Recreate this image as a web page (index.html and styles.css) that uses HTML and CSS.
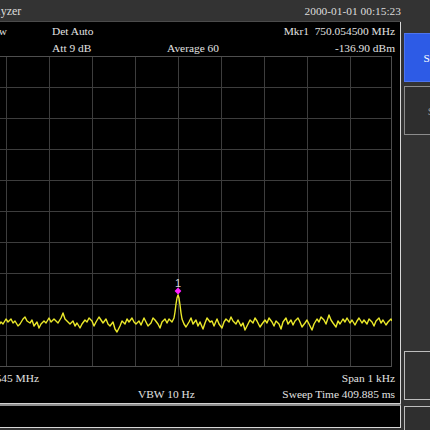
FILE: index.html
```html
<!DOCTYPE html>
<html>
<head>
<meta charset="utf-8">
<link rel="stylesheet" href="styles.css">
</head>
<body>
<div class="app">
  <div class="main">
    <div class="titlebar"><span class="title">Spectrum Analyzer</span><span class="clock">2000-01-01 00:15:23</span></div>
    <div class="panel">
      <div class="info info-top">
        <div class="ca"><span>IFGain:Low</span></div><span>Det Auto</span><span></span><span class="cd">Mkr1&nbsp;&nbsp;750.054500 MHz</span>
        <div class="ca"></div><span>Att 9 dB</span><span>Average 60</span><span class="cd">-136.90 dBm</span>
      </div>
      <svg class="plot" width="429" height="311" viewBox="0 0 429 311">
        <g class="grid">
          <line x1="43.5" y1="0" x2="43.5" y2="311"/>
          <line x1="86.5" y1="0" x2="86.5" y2="311"/>
          <line x1="129.5" y1="0" x2="129.5" y2="311"/>
          <line x1="172.5" y1="0" x2="172.5" y2="311"/>
          <line x1="215.5" y1="0" x2="215.5" y2="311"/>
          <line x1="258.5" y1="0" x2="258.5" y2="311"/>
          <line x1="301.5" y1="0" x2="301.5" y2="311"/>
          <line x1="344.5" y1="0" x2="344.5" y2="311"/>
          <line x1="387.5" y1="0" x2="387.5" y2="311"/>
          <line x1="0" y1="31.5" x2="429" y2="31.5"/>
          <line x1="0" y1="62.5" x2="429" y2="62.5"/>
          <line x1="0" y1="93.5" x2="429" y2="93.5"/>
          <line x1="0" y1="124.5" x2="429" y2="124.5"/>
          <line x1="0" y1="155.5" x2="429" y2="155.5"/>
          <line x1="0" y1="186.5" x2="429" y2="186.5"/>
          <line x1="0" y1="217.5" x2="429" y2="217.5"/>
          <line x1="0" y1="248.5" x2="429" y2="248.5"/>
          <line x1="0" y1="279.5" x2="429" y2="279.5"/>
        </g>
        <rect class="frame" x="0.5" y="0.5" width="428" height="310"/>
        <polyline class="trace" points="0,262 2,265 4,263 7,267 9,264 11,266 14,262 16,266 19,264 21,268 24,263 26,265 28,262 31,266 33,264 36,269 38,266 40,268 43,263 45,266 48,263 50,267 52,265 55,270 57,268 60,263 62,261 64,265 67,267 69,264 71,270 74,266 76,272 78,268 81,265 83,267 86,262 88,266 91,263 93,265 95,267 98,262 100,257 102,263 105,266 107,268 110,265 112,270 114,267 117,272 119,268 122,264 124,266 126,262 129,265 131,270 133,266 136,261 138,264 140,267 143,263 145,268 147,270 150,266 152,273 154,276 157,270 159,265 162,268 164,263 166,266 169,262 171,266 173,268 176,265 178,269 181,262 183,266 185,270 188,267 190,262 192,264 195,268 197,272 199,266 202,263 204,267 206,263 209,266 211,262 212,256 213,248 214,242 215,239 216,242 217,249 218,257 219,263 221,268 223,271 226,266 228,262 230,268 233,264 235,270 237,266 240,273 242,267 244,262 247,266 249,265 251,270 254,263 256,268 259,272 261,266 263,263 266,266 268,261 270,265 273,268 275,264 278,270 280,267 282,274 285,268 287,264 290,267 292,262 294,265 297,271 299,268 302,264 304,267 306,262 309,266 311,270 313,265 316,268 318,273 320,266 323,262 325,268 328,264 330,269 332,265 335,262 337,266 339,271 342,267 344,264 347,270 349,274 351,268 354,263 356,266 358,261 361,264 363,268 366,259 368,264 370,267 373,271 375,265 377,268 380,263 382,266 384,262 387,267 389,264 392,269 394,265 396,262 399,267 401,264 404,268 406,263 409,266 411,270 413,265 416,262 418,267 420,264 423,269 425,266 428,263 429,265"/>
        <text class="mkr-label" x="215" y="230.5">1</text>
        <polygon class="mkr" points="215,231.6 218.4,235 215,238.4 211.6,235"/>
      </svg>
      <div class="info info-bottom">
        <div class="ca"><span>Center 750.0545 MHz</span></div><span></span><span></span><span class="cd">Span 1 kHz</span>
        <div class="ca"></div><span></span><span>VBW 10 Hz</span><span class="cd">Sweep Time 409.885 ms</span>
      </div>
    </div>
    <div class="status"></div>
  </div>
  <div class="side">
    <div class="key key-active">Span</div>
    <div class="key key-dim">Set</div>
    <div class="key key-empty"></div>
    <div class="key key-empty"></div>
    <div class="key key-empty"></div>
    <div class="key key-empty"></div>
    <div class="key key-last"></div>
    <div class="key key-back"></div>
  </div>
</div>
</body>
</html>
```

FILE: styles.css
```css
html, body {
  margin: 0;
  padding: 0;
  background: #333333;
  overflow: hidden;
}

.app {
  display: flex;
  width: 430px;
  height: 430px;
  overflow: hidden;
  font-family: "Liberation Serif", "Times New Roman", serif;
  font-size: 11.4px;
  color: #e2e2e2;
}

.main {
  flex: 0 0 481px;
  margin-left: -80px;
  display: flex;
  flex-direction: column;
}

.titlebar {
  display: flex;
  justify-content: space-between;
  height: 21px;
  line-height: 22px;
  padding-left: 9px;
  background: #333333;
  border-bottom: 1px solid #4b4b4b;
  color: #dcdcdc;
  white-space: nowrap;
}

.title {
  font-size: 12px;
}

.panel {
  background: #000000;
  padding: 1px 0 0 43px;
  border-right: 1px solid #d8d8d8;
  border-bottom: 1px solid #cfcfcf;
}

.info {
  display: grid;
  line-height: 16.5px;
  padding-right: 5px;
  white-space: nowrap;
}

.info-top {
  grid-template-columns: 89px 115px 1fr auto;
}

.info-top .ca {
  padding-right: 45px;
}

.info-bottom {
  grid-template-columns: 76px 99px 1fr auto;
  margin-top: 2.5px;
}

.ca {
  display: flex;
  justify-content: flex-end;
  min-width: 0;
}

.ca span {
  flex-shrink: 0;
}

.cd {
  text-align: right;
}

.plot {
  display: block;
}

.grid line {
  stroke: #3d3d3d;
  stroke-width: 1;
}

.frame {
  fill: none;
  stroke: #4e4e4e;
  stroke-width: 1;
}

.trace {
  fill: none;
  stroke: #ebe92a;
  stroke-width: 1.4;
  stroke-linejoin: round;
}

.mkr {
  fill: #ff1eff;
}

.mkr-label {
  fill: #d4d4d4;
  font-family: "Liberation Sans", Arial, sans-serif;
  font-size: 11px;
  text-anchor: middle;
}

.status {
  height: 21px;
  background: #000000;
  border-top: 2px solid #8e8e8e;
  border-right: 1px solid #d8d8d8;
  border-bottom: 1px solid #d8d8d8;
}

.side {
  flex: 1 0 auto;
  min-width: 0;
  display: flex;
  flex-direction: column;
  gap: 4px;
  padding: 33px 0 0 3px;
}

.key {
  flex: 0 0 auto;
  box-sizing: border-box;
  width: 62px;
  height: 49px;
  display: flex;
  align-items: center;
  justify-content: center;
  white-space: nowrap;
}

.key-active {
  background: #2d5be6;
  border: 1px solid #4d74ee;
  color: #ffffff;
}

.key-dim {
  background: #2e2e2e;
  border: 1px solid #8c8c8c;
  color: #9a9a9a;
}

.key-last {
  background: #313131;
  border: 1px solid #bdbdbd;
}

.key-back {
  margin-top: 2px;
  background: #2f2f2f;
  border-top: 1px solid #bdbdbd;
  border-left: 1px solid #bdbdbd;
}
```
